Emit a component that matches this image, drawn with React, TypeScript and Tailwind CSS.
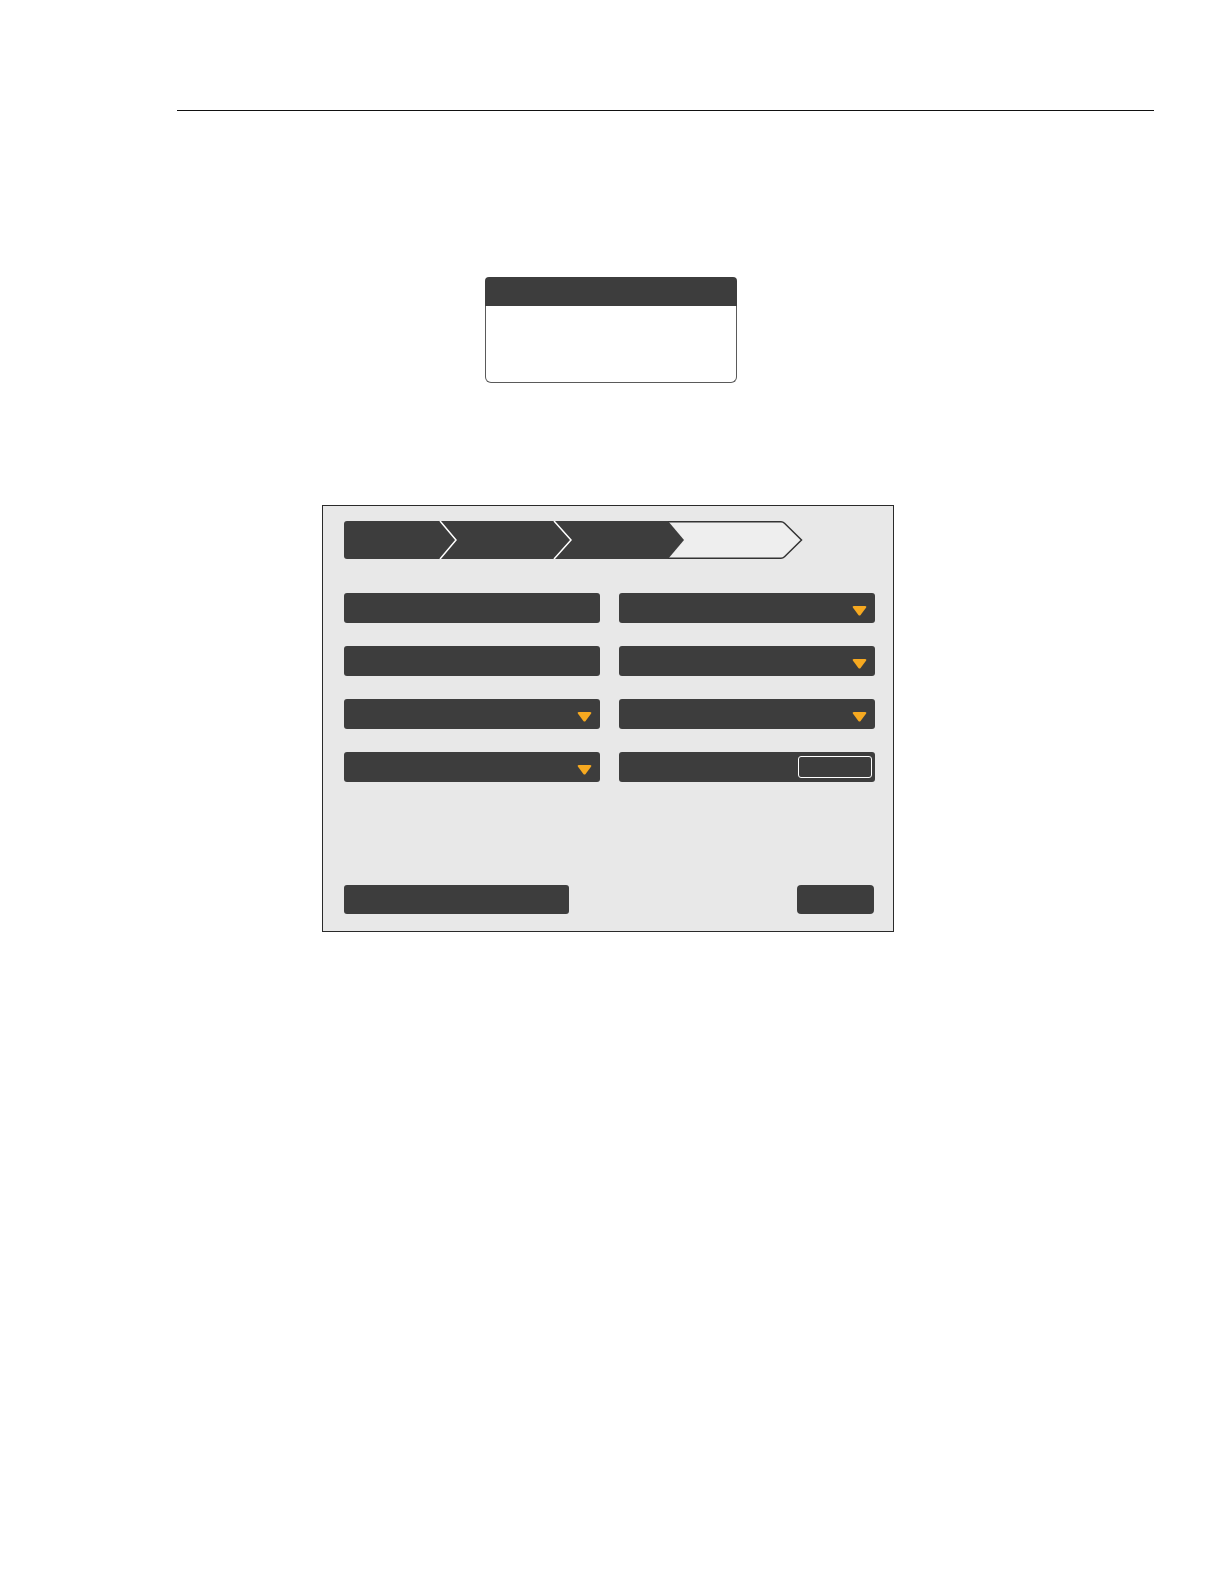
import React from 'react'

const DARK = '#3d3d3d'

function Breadcrumb() {
  return (
    <svg width="462" height="38" viewBox="0 0 462 38" className="block">
      <path d="M3,0 H96 L112,19 L96,38 H3 Q0,38 0,35 V3 Q0,0 3,0 Z" fill={DARK} />
      <path d="M96,0 H210 L227,19 L210,38 H96 L112,19 Z" fill={DARK} />
      <path d="M210,0 H324 L340,19 L324,38 H210 L227,19 Z" fill={DARK} />
      <path
        d="M324,0.75 H437 Q439,0.75 440.5,2.2 L457.5,19 L440.5,35.8 Q439,37.25 437,37.25 H324"
        fill="#eeeeee"
        stroke="#333"
        strokeWidth="1.5"
      />
      <path d="M324,0 L340,19 L324,38 Z" fill={DARK} />
      <polyline points="96,0 112,19 96,38" fill="none" stroke="#fff" strokeWidth="1.5" />
      <polyline points="210,0 227,19 210,38" fill="none" stroke="#fff" strokeWidth="1.5" />
    </svg>
  )
}

function Caret() {
  return (
    <svg width="15" height="10" viewBox="0 0 15 10" className="block">
      <path d="M2,0 H13 Q15,0 14,1.8 L8.6,8.9 Q7.5,10.2 6.4,8.9 L1,1.8 Q0,0 2,0 Z" fill="#f6a920" />
    </svg>
  )
}

function Field({ kind }: { kind?: 'select' | 'box' }) {
  return (
    <div className="flex h-[30px] items-center justify-end rounded-[3px] bg-[#3d3d3d] pr-[8px]">
      {kind === 'select' && (
        <div className="mt-[6px]">
          <Caret />
        </div>
      )}
      {kind === 'box' && <div className="-mr-[5px] h-[22px] w-[74px] rounded-[3px] border border-white" />}
    </div>
  )
}

export default function App() {
  return (
    <div className="relative h-[1584px] w-[1224px] bg-white pt-[110px] font-['Liberation_Sans',sans-serif]">
      <div className="ml-[177px] h-px w-[977px] bg-[#111]" />

      {/* small dialog */}
      <div className="ml-[485px] mt-[166px] w-[252px]">
        <div className="h-[29px] rounded-t-[4px] bg-[#3d3d3d]" />
        <div className="h-[77px] rounded-b-[6px] border border-t-0 border-[#5a5a5a] bg-white" />
      </div>

      {/* setup panel */}
      <div className="ml-[322px] mt-[122px] flex h-[427px] w-[572px] flex-col border border-[#2a2a2a] bg-[#e8e8e8] pb-[17px] pl-[21px] pr-[18px] pt-[15px]">
        <Breadcrumb />
        <div className="mt-[34px] grid grid-cols-2 gap-x-[19px] gap-y-[23px]">
          <Field />
          <Field kind="select" />
          <Field />
          <Field kind="select" />
          <Field kind="select" />
          <Field kind="select" />
          <Field kind="select" />
          <Field kind="box" />
        </div>
        <div className="mt-auto flex items-end justify-between">
          <div className="h-[29px] w-[225px] rounded-[3px] bg-[#3d3d3d]" />
          <div className="mr-[1px] h-[29px] w-[77px] rounded-[4px] bg-[#3d3d3d]" />
        </div>
      </div>
    </div>
  )
}
